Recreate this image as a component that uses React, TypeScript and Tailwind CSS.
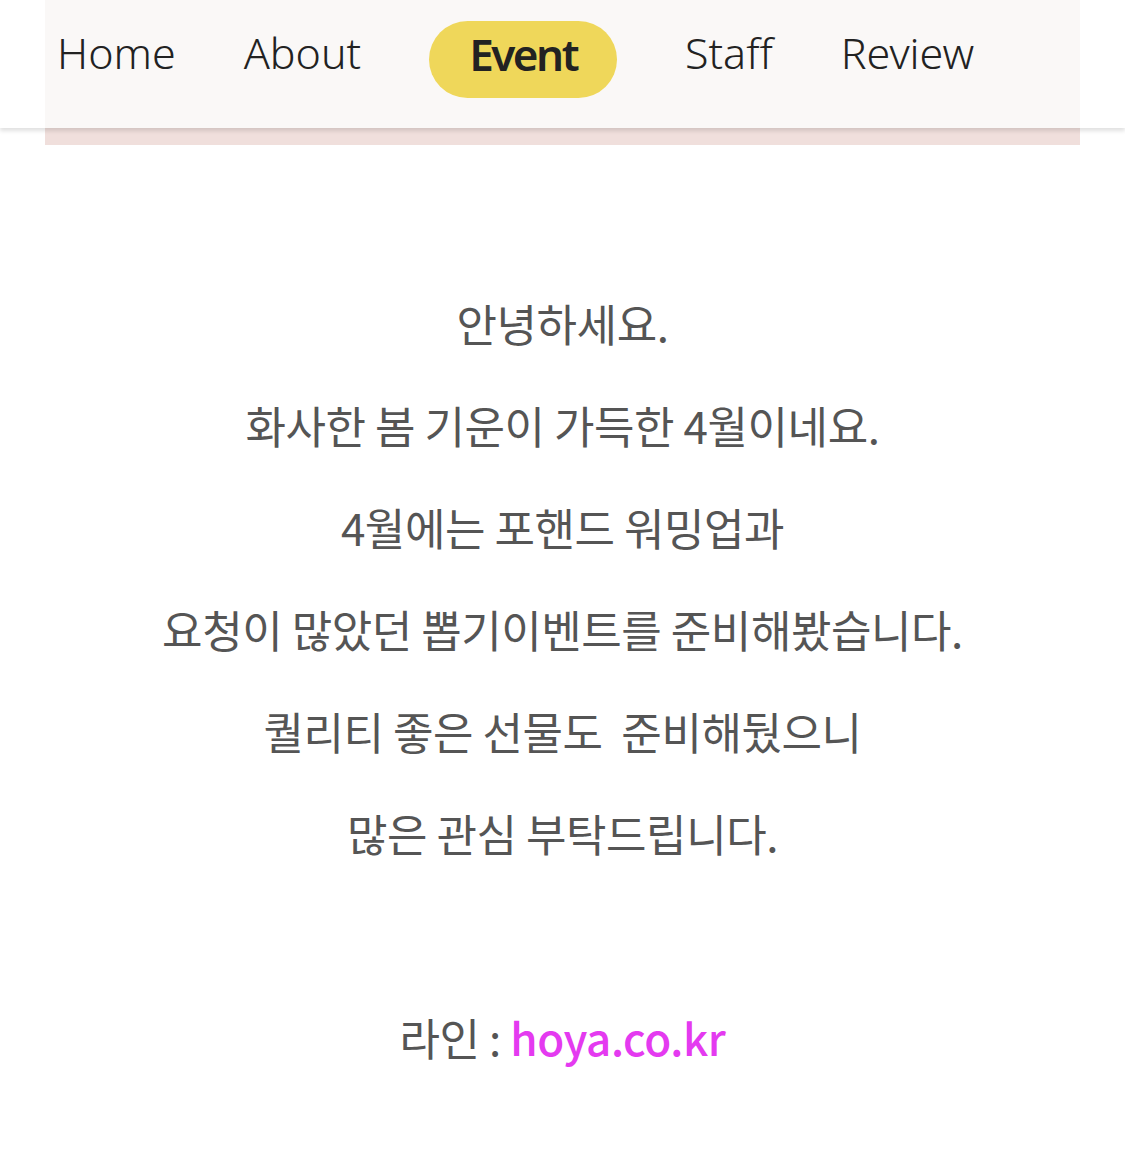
import React from 'react';

const navItems = ['Home', 'About', 'Event', 'Staff', 'Review'];

const lines = [
  '안녕하세요.',
  '화사한 봄 기운이 가득한 4월이네요.',
  '4월에는 포핸드 워밍업과',
  '요청이 많았던 뽑기이벤트를 준비해봤습니다.',
  '퀄리티 좋은 선물도  준비해뒀으니',
  '많은 관심 부탁드립니다.',
];

const korean = { fontFamily: '"Noto Sans CJK KR", sans-serif' };

const App: React.FC = () => {
  return (
    <div
      className="min-h-[1160px] w-[1125px] bg-white"
      style={{ fontFamily: '"Noto Sans", "Noto Sans CJK KR", sans-serif' }}
    >
      <header className="relative z-10 h-[128px] w-full bg-white shadow-[0_3px_4px_rgba(0,0,0,0.12)]">
        <nav className="ml-[45px] flex h-full w-[1035px] items-start bg-[#faf8f7] pl-[12px] pt-[21px]">
          <ul className="flex items-center gap-[68px]">
            {navItems.map((item) =>
              item === 'Event' ? (
                <li
                  key={item}
                  className="flex h-[77px] items-center rounded-full bg-[#efd75a] px-[40px] pb-[12px] text-[44px] font-semibold tracking-[-2.5px] text-[#222]"
                >
                  {item}
                </li>
              ) : (
                <li
                  key={item}
                  className="flex h-[77px] items-center pb-[12px] text-[43px] font-light text-[#222]"
                >
                  {item}
                </li>
              ),
            )}
          </ul>
        </nav>
      </header>
      <div className="ml-[45px] h-[17px] w-[1035px] bg-[#f0dfdc]" />

      <main className="flex flex-col items-center pt-[127px] text-[#555]">
        {lines.map((line) => (
          <p
            key={line}
            className="whitespace-pre text-[44px] leading-[102px] tracking-[-0.01em]"
            style={korean}
          >
            {line}
          </p>
        ))}
        <p
          className="mt-[102px] whitespace-pre text-[44px] leading-[102px] tracking-[-0.01em]"
          style={korean}
        >
          라인 : <span className="font-medium tracking-[-0.01em] text-[#e43af0]">hoya.co.kr</span>
        </p>
      </main>
    </div>
  );
};

export default App;
